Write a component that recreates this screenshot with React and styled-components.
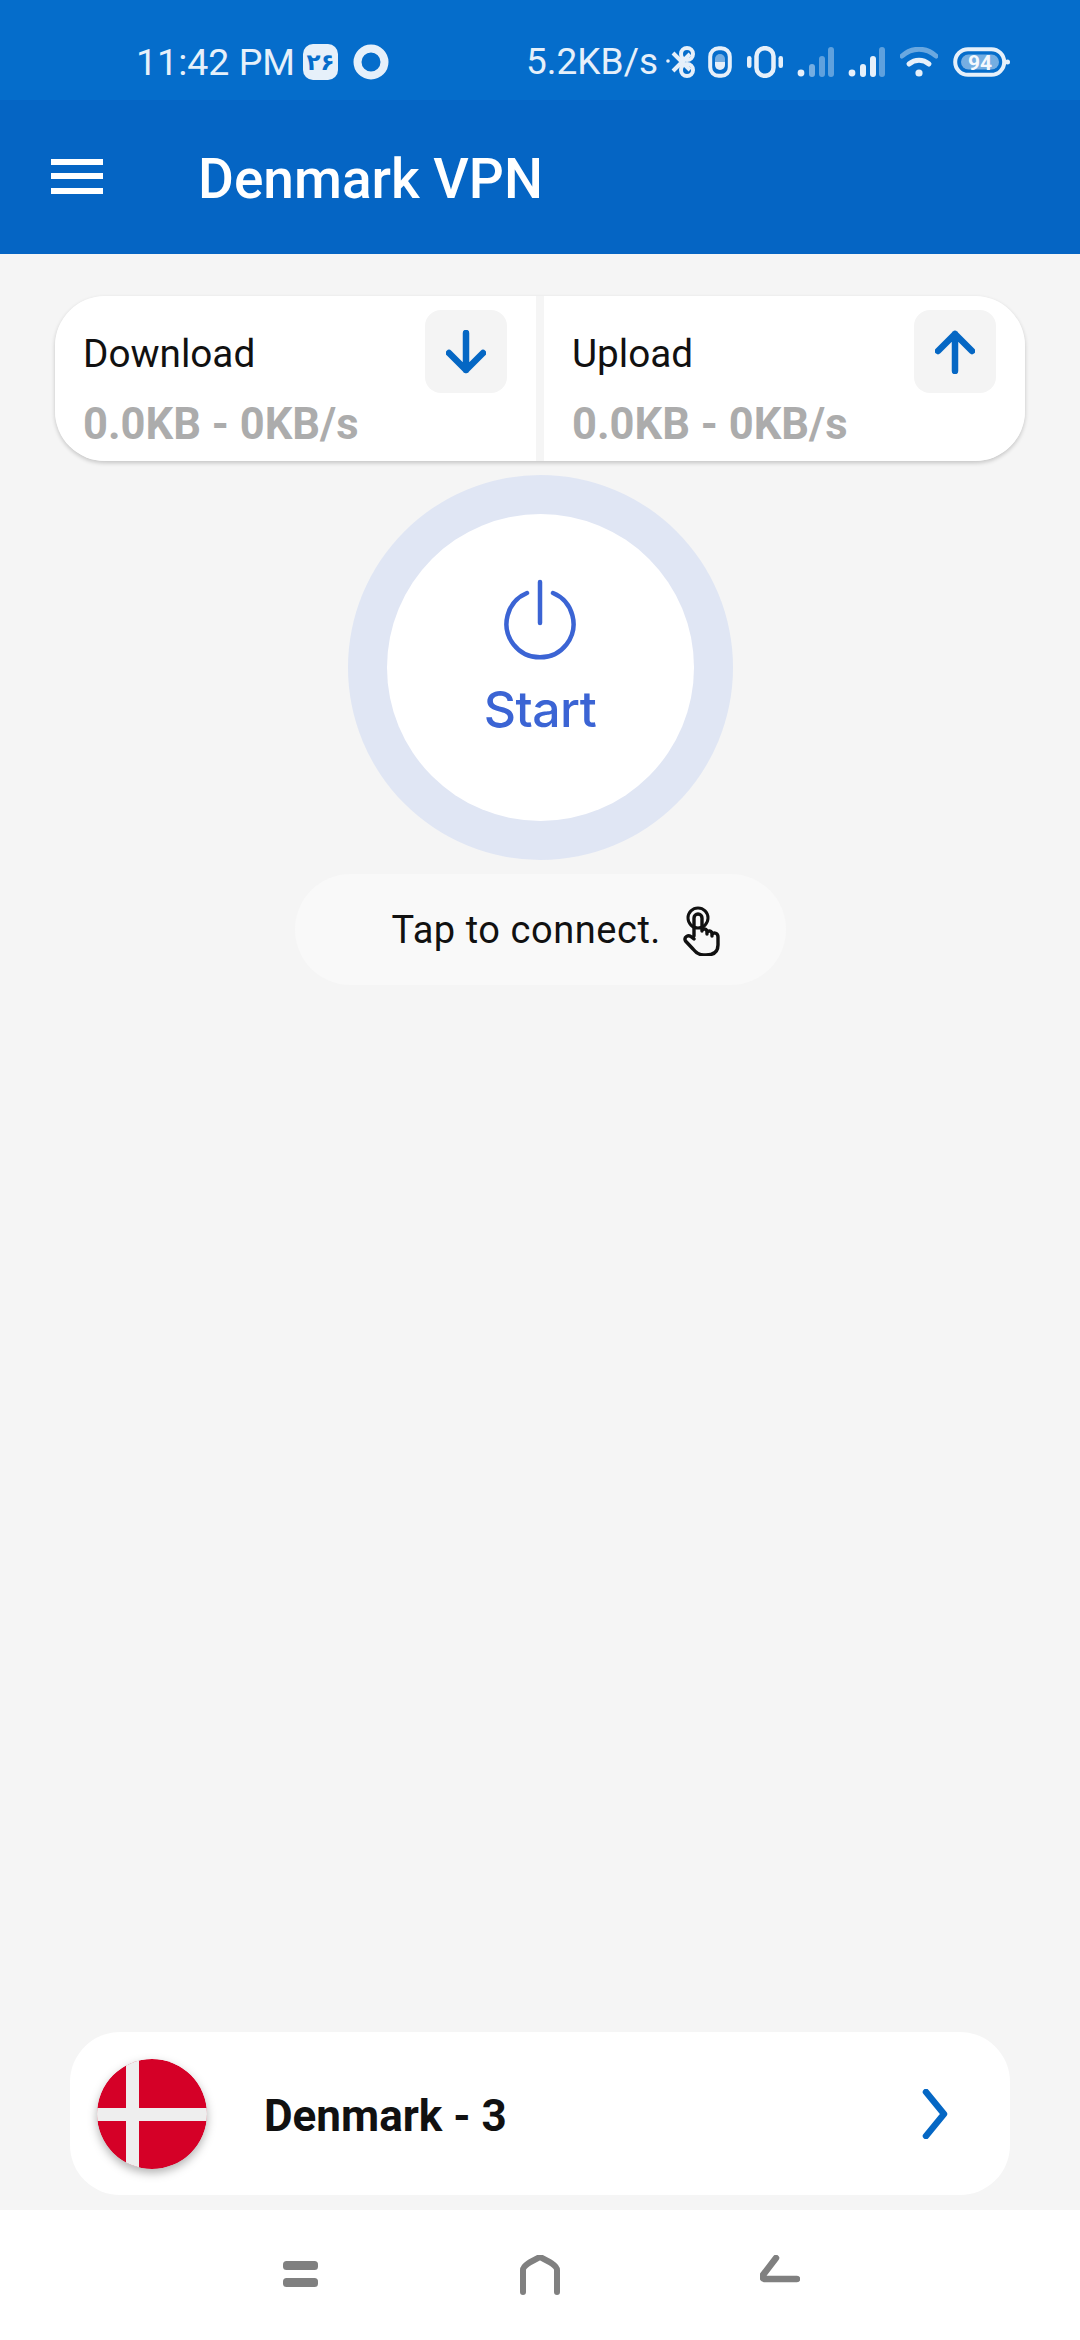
import React from 'react'
import styled, { createGlobalStyle } from 'styled-components'

const GlobalStyle = createGlobalStyle`
  html, body {
    margin: 0;
    padding: 0;
    background: #f5f5f5;
  }
  * {
    box-sizing: border-box;
  }
`

const BLUE = '#0567c4'

const Screen = styled.div`
  width: 1080px;
  height: 2340px;
  display: flex;
  flex-direction: column;
  background: #f5f5f5;
  font-family: Roboto, "Noto Sans", sans-serif;
  overflow: hidden;
`

const StatusBar = styled.div`
  height: 100px;
  flex: none;
  display: flex;
  align-items: center;
  justify-content: space-between;
  padding: 24px 70px 0 136px;
  background: #056dcb;
  color: #e6f0fa;
`

const StatusGroup = styled.div`
  display: flex;
  align-items: center;
`

const Clock = styled.span`
  font-size: 37.500px;
  line-height: 44px;
  margin-right: 8px;
`

const DateBadge = styled.span`
  width: 35px;
  height: 36px;
  margin-right: 15px;
  border-radius: 10px;
  background: #e6f0fa;
  color: #056dcb;
  display: flex;
  align-items: center;
  justify-content: center;
  font-family: "DejaVu Sans", sans-serif;
  font-size: 23px;
  font-weight: 700;
  line-height: 36px;
`

const Speed = styled.span`
  font-size: 37px;
  line-height: 44px;
  margin-right: 8px;
`

const StatusIcon = styled.svg`
  display: block;
  flex: none;
  margin-right: ${(p) => p.$gap || 0}px;
`

const AppBar = styled.header`
  height: 154px;
  flex: none;
  display: flex;
  align-items: center;
  padding: 0 0 2px 51px;
  background: #0565c4;
`

const Burger = styled.div`
  width: 52px;
  height: 35px;
  margin-right: 95px;
  display: flex;
  flex-direction: column;
  justify-content: space-between;
  & span {
    display: block;
    height: 6px;
    background: #fff;
  }
`

const Title = styled.h1`
  margin: 5px 0 0;
  color: #fff;
  font-size: 55px;
  font-weight: 500;
  line-height: 60px;
`

const Main = styled.main`
  flex: 1;
  display: flex;
  flex-direction: column;
  align-items: center;
  padding: 42px 0 15px;
`

const StatsCard = styled.section`
  width: 970px;
  height: 165px;
  display: grid;
  grid-template-columns: 1fr 1fr;
  gap: 8px;
  border-radius: 50px;
  box-shadow: 0 2px 4px rgba(0, 0, 0, 0.2);
  overflow: hidden;
`

const StatCell = styled.div`
  background: #fff;
  padding: 14px 29px 0 28px;
`

const StatHead = styled.div`
  display: flex;
  justify-content: space-between;
  align-items: flex-start;
  height: 83px;
`

const StatLabel = styled.span`
  margin-top: 22px;
  color: #111;
  font-size: 38.700px;
  line-height: 44px;
`

const ArrowBox = styled.div`
  width: 82px;
  height: 83px;
  border-radius: 16px;
  background: #f4f4f4;
  display: flex;
  align-items: center;
  justify-content: center;
`

const StatValue = styled.div`
  margin-top: 7px;
  color: #acacac;
  font-size: 43.500px;
  font-weight: 700;
  line-height: 50px;
`

const PowerRing = styled.div`
  width: 385px;
  height: 385px;
  margin-top: 14px;
  border-radius: 50%;
  background: #e0e6f4;
  display: flex;
  align-items: center;
  justify-content: center;
`

const PowerButton = styled.div`
  width: 307px;
  height: 307px;
  padding-top: 65px;
  border-radius: 50%;
  background: #fff;
  display: flex;
  flex-direction: column;
  align-items: center;
`

const StartLabel = styled.span`
  margin-top: 16px;
  color: #3b64d4;
  font-family: Inter, sans-serif;
  font-size: 50px;
  font-weight: 500;
  line-height: 60px;
  letter-spacing: -0.5px;
`

const Hint = styled.div`
  width: 491px;
  height: 111px;
  margin-top: 14px;
  padding: 0 62px 0 97px;
  border-radius: 56px;
  background: #f9f9f9;
  display: flex;
  align-items: center;
  justify-content: space-between;
`

const HintText = styled.span`
  color: #111;
  font-size: 38px;
  line-height: 48px;
  letter-spacing: 0.55px;
`

const ServerCard = styled.section`
  width: 940px;
  height: 163px;
  margin-top: auto;
  padding: 0 62px 0 27px;
  border-radius: 50px;
  background: #fff;
  display: flex;
  align-items: center;
`

const Flag = styled.svg`
  display: block;
  flex: none;
  border-radius: 50%;
  filter: drop-shadow(0 4px 5px rgba(0, 0, 0, 0.3));
`

const ServerName = styled.span`
  flex: 1;
  margin: 4px 0 0 57px;
  color: #111;
  font-size: 44px;
  font-weight: 700;
  line-height: 50px;
`

const NavBar = styled.nav`
  height: 130px;
  flex: none;
  display: flex;
  align-items: flex-start;
  background: #fff;
  padding: 45px 0 0 283px;
`

const NavIcon = styled.svg`
  display: block;
  flex: none;
  margin-left: ${(p) => p.$left || 0}px;
`

function SignalIcon() {
  return (
    <StatusIcon width="37" height="30" viewBox="0 0 37 30" $gap={14}>
      <circle cx="4" cy="26" r="3.4" fill="#e6f0fa" />
      <rect x="12" y="17" width="6" height="13" rx="3" fill="#e6f0fa" opacity="0.5" />
      <rect x="22" y="9" width="6" height="21" rx="3" fill="#e6f0fa" opacity="0.4" />
      <rect x="31" y="0" width="6" height="30" rx="3" fill="#e6f0fa" opacity="0.4" />
    </StatusIcon>
  )
}

function SignalIconStrong() {
  return (
    <StatusIcon width="37" height="30" viewBox="0 0 37 30" $gap={15}>
      <circle cx="4" cy="26" r="3.4" fill="#e6f0fa" />
      <rect x="12" y="17" width="6" height="13" rx="3" fill="#e6f0fa" />
      <rect x="22" y="9" width="6" height="21" rx="3" fill="#e6f0fa" />
      <rect x="31" y="0" width="6" height="30" rx="3" fill="#e6f0fa" opacity="0.4" />
    </StatusIcon>
  )
}

export default function App() {
  return (
    <Screen>
      <GlobalStyle />
      <StatusBar>
        <StatusGroup>
          <Clock>11:42 PM</Clock>
          <DateBadge>۲۶</DateBadge>
          <StatusIcon width="36" height="36" viewBox="0 0 36 36">
            <circle cx="18" cy="18" r="13.5" fill="none" stroke="#e6f0fa" strokeWidth="8" />
          </StatusIcon>
        </StatusGroup>
        <StatusGroup>
          <Speed>5.2KB/s</Speed>
          <StatusIcon width="30" height="32" viewBox="0 0 30 32" $gap={12}>
            <circle cx="2" cy="15" r="1.8" fill="#e6f0fa" />
            <path d="M7 7 L24 24 M7 25 L24 8" stroke="#e6f0fa" strokeWidth="4" fill="none" />
            <circle cx="21" cy="8" r="6" stroke="#e6f0fa" strokeWidth="4" fill="none" />
            <circle cx="21" cy="24" r="6" stroke="#e6f0fa" strokeWidth="4" fill="none" />
          </StatusIcon>
          <StatusIcon width="24" height="32" viewBox="0 0 24 32" $gap={15}>
            <rect x="2.200" y="2.200" width="19.600" height="27.600" rx="8.500" fill="none" stroke="#e6f0fa" strokeWidth="4" />
            <path d="M7 16 h10 v3 a5 5 0 0 1 -10 0 Z" fill="#e6f0fa" />
            <path d="M7 16 v-3 a5 5 0 0 1 10 0 v3 Z" fill="#e6f0fa" opacity="0.5" />
          </StatusIcon>
          <StatusIcon width="36" height="32" viewBox="0 0 36 32" $gap={14}>
            <rect x="0" y="10" width="4.500" height="12" rx="2.200" fill="#e6f0fa" />
            <rect x="31.500" y="10" width="4.500" height="12" rx="2.200" fill="#e6f0fa" />
            <rect x="9.500" y="2.200" width="17" height="27.600" rx="8" fill="none" stroke="#e6f0fa" strokeWidth="4.500" />
          </StatusIcon>
          <SignalIcon />
          <SignalIconStrong />
          <StatusIcon width="38" height="30" viewBox="0 0 38 30" $gap={15}>
            <path d="M2 9 C12 0 26 0 36 9" fill="none" stroke="#e6f0fa" strokeWidth="5" strokeLinecap="round" opacity="0.45" />
            <path d="M9 17 C15 12 23 12 29 17" fill="none" stroke="#e6f0fa" strokeWidth="5" strokeLinecap="round" />
            <circle cx="19" cy="26" r="3.600" fill="#e6f0fa" />
          </StatusIcon>
          <StatusIcon width="57" height="30" viewBox="0 0 57 30">
            <rect x="2.200" y="2.200" width="49" height="25.600" rx="12.800" fill="none" stroke="#e6f0fa" strokeWidth="4" />
            <rect x="8" y="7.500" width="38" height="15" rx="7.500" fill="#e6f0fa" opacity="0.5" />
            <circle cx="54.500" cy="15" r="2.500" fill="#e6f0fa" />
            <text x="27" y="22.500" textAnchor="middle" fontFamily="Roboto, sans-serif" fontSize="21" fontWeight="700" fill="#f4f8fd">94</text>
          </StatusIcon>
        </StatusGroup>
      </StatusBar>

      <AppBar>
        <Burger>
          <span />
          <span />
          <span />
        </Burger>
        <Title>Denmark VPN</Title>
      </AppBar>

      <Main>
        <StatsCard>
          <StatCell>
            <StatHead>
              <StatLabel>Download</StatLabel>
              <ArrowBox>
                <svg width="40" height="44" viewBox="0 0 40 44">
                  <path d="M20 3 V40 M3 23 L20 40 L37 23" fill="none" stroke={BLUE} strokeWidth="6.500" strokeLinecap="round" strokeLinejoin="round" />
                </svg>
              </ArrowBox>
            </StatHead>
            <StatValue>0.0KB - 0KB/s</StatValue>
          </StatCell>
          <StatCell>
            <StatHead>
              <StatLabel>Upload</StatLabel>
              <ArrowBox>
                <svg width="40" height="44" viewBox="0 0 40 44">
                  <path d="M20 41 V4 M3 21 L20 4 L37 21" fill="none" stroke={BLUE} strokeWidth="6.500" strokeLinecap="round" strokeLinejoin="round" />
                </svg>
              </ArrowBox>
            </StatHead>
            <StatValue>0.0KB - 0KB/s</StatValue>
          </StatCell>
        </StatsCard>

        <PowerRing>
          <PowerButton>
            <svg width="74" height="84" viewBox="0 0 74 84">
              <path d="M24 14 A33.500 33.500 0 1 0 50 14" fill="none" stroke="#3b64d4" strokeWidth="4.500" strokeLinecap="round" />
              <path d="M37 3 V44" fill="none" stroke="#3b64d4" strokeWidth="4.500" strokeLinecap="round" />
            </svg>
            <StartLabel>Start</StartLabel>
          </PowerButton>
        </PowerRing>

        <Hint>
          <HintText>Tap to connect.</HintText>
          <svg width="42" height="52" viewBox="22 9 42 52">
            <circle cx="38" cy="23" r="10" fill="none" stroke="#111" strokeWidth="3" />
            <path d="M34 41 V23 a4 4 0 0 1 8 0 V36 M42 35 c2 -2 5 -1 5 2 V39 M47 37 c2 -2 5 -1 5 2 V41 M52 39 c2 -2 6 -1 6 3 V50 c0 7 -5 10 -12 10 h-2 c-5 0 -8 -2 -11 -6 L25.500 46 c-2 -4 3 -7 6 -4 L34 44" fill="none" stroke="#111" strokeWidth="3.400" strokeLinecap="round" strokeLinejoin="round" />
          </svg>
        </Hint>

        <ServerCard>
          <Flag width="110" height="110" viewBox="0 0 110 110">
            <circle cx="55" cy="55" r="55" fill="#d50027" />
            <rect x="29" y="0" width="13" height="110" fill="#eeeeee" />
            <rect x="0" y="49" width="110" height="13" fill="#eeeeee" />
          </Flag>
          <ServerName>Denmark - 3</ServerName>
          <svg width="28" height="50" viewBox="0 0 28 50">
            <path d="M6 3 L24 25 L6 47" fill="none" stroke={BLUE} strokeWidth="6.500" strokeLinecap="round" strokeLinejoin="round" />
          </svg>
        </ServerCard>
      </Main>

      <NavBar>
        <NavIcon width="35" height="38" viewBox="0 0 35 38">
          <rect x="0" y="6" width="35" height="9" rx="3.500" fill="#808080" />
          <rect x="0" y="23" width="35" height="9" rx="3.500" fill="#808080" />
        </NavIcon>
        <NavIcon width="40" height="40" viewBox="0 0 40 40" $left={202}>
          <path d="M3 37 V15 C3 10 14 5 20 2 C26 5 37 10 37 15 V37" fill="none" stroke="#808080" strokeWidth="6" strokeLinecap="round" strokeLinejoin="round" />
        </NavIcon>
        <NavIcon width="40" height="30" viewBox="0 0 40 30" $left={200}>
          <path d="M16 3 L3 20 C2 23 3 24 6 24 H37" fill="none" stroke="#808080" strokeWidth="6.500" strokeLinecap="round" strokeLinejoin="round" />
        </NavIcon>
      </NavBar>
    </Screen>
  )
}
